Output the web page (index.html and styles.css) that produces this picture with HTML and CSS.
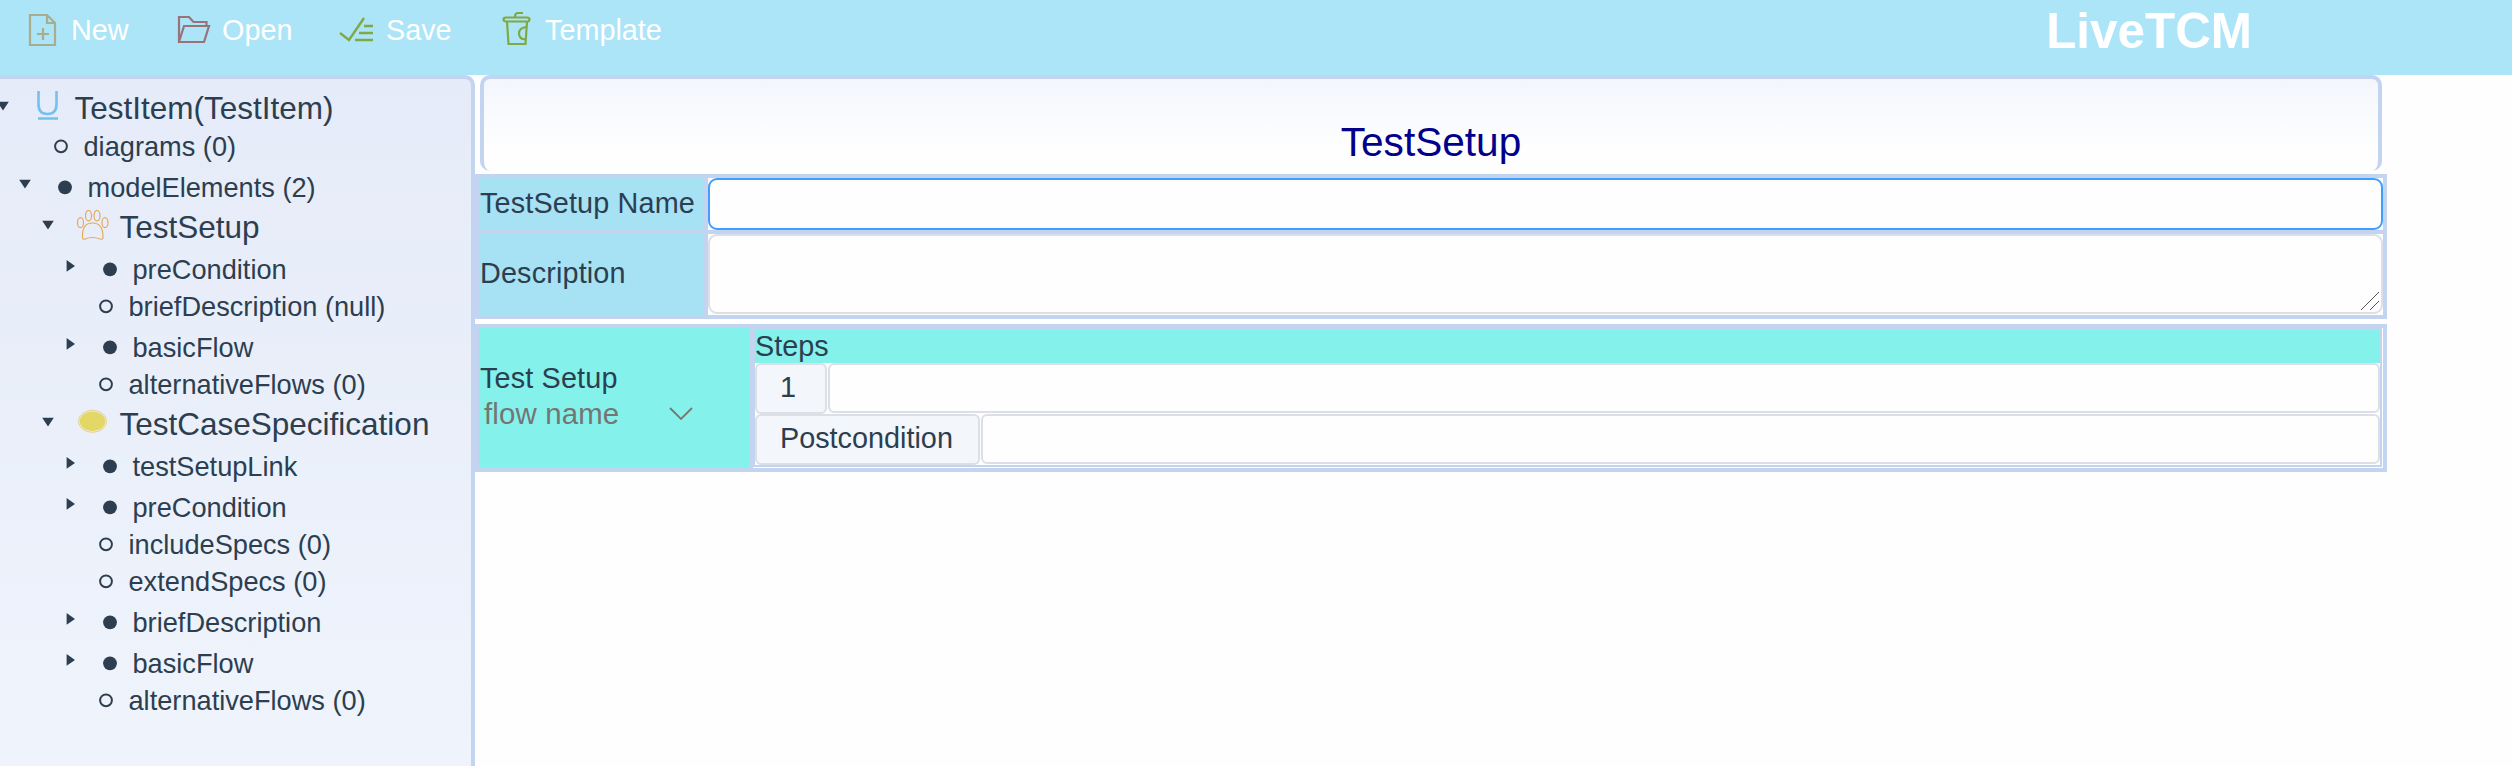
FILE: index.html
```
<!DOCTYPE html>
<html lang="en">
<head>
<meta charset="utf-8">
<title>LiveTCM</title>
<link rel="stylesheet" href="styles.css">
</head>
<body>
<svg class="defs" aria-hidden="true">
  <symbol id="down" viewBox="0 0 12 37"><path d="M.2 10.800h11.600L6 19.500z" fill="#2c3e50"/></symbol>
  <symbol id="right" viewBox="0 0 12 37"><path d="M2.600 9v11.700l8.400-5.800z" fill="#2c3e50"/></symbol>
  <symbol id="full" viewBox="0 0 14 37"><circle cx="7" cy="18.3" r="6.9" fill="#2c3e50"/></symbol>
  <symbol id="open" viewBox="0 0 14 37"><circle cx="7" cy="18.3" r="5.900" fill="none" stroke="#2c3e50" stroke-width="2"/></symbol>
</svg>
<header class="topbar">
  <nav class="tools">
    <a class="tool new"><svg class="ico" viewBox="0 0 32 36" fill="none" stroke="#a7ad8d" stroke-width="2.2"><path d="M3 4h17l8 8v22H3zM20 4v8h8M16 17v12M10 23h12"/></svg><span>New</span></a>
    <a class="tool open"><svg class="ico" viewBox="0 0 36 36" fill="none" stroke="#9a7379" stroke-width="2.2"><path d="M3 30V5h10l4.500 5h13v4M3 30l5-16h25l-5 16z"/></svg><span>Open</span></a>
    <a class="tool save"><svg class="ico" viewBox="0 0 36 36" fill="none" stroke="#80a843" stroke-width="2.4"><path d="M1 21l9 7L25 6M25 14h9M20 21h14M16 28h18"/></svg><span>Save</span></a>
    <a class="tool template"><svg class="ico" viewBox="0 0 32 38" fill="none" stroke="#80a843" stroke-width="2.2"><path d="M14 7q0-4 3-4h5M5 7.500h21q2.500 0 2.500 2t-2.500 2H5q-2.500 0-2.500-2t2.500-2zM6 12l1.500 22h17L26 12M25 17q-7 1-7 6.500t6.500 6"/></svg><span>Template</span></a>
  </nav>
  <h1 class="brand">LiveTCM</h1>
</header>
<div class="body">
  <aside class="tree">
    <div class="row l0 node"><svg class="arrow"><use href="#down"/></svg><svg class="icon" viewBox="0 0 34 37" fill="none" stroke="#74c0ee" stroke-width="2.6"><path d="M7.500 0v13q0 10 9 10t9-10V0M7 27.500h20"/></svg><span>TestItem(TestItem)</span></div>
    <div class="row l1 leaf"><svg class="dot"><use href="#open"/></svg><span>diagrams (0)</span></div>
    <div class="row l1"><svg class="arrow"><use href="#down"/></svg><svg class="dot"><use href="#full"/></svg><span>modelElements (2)</span></div>
    <div class="row l2 node"><svg class="arrow"><use href="#down"/></svg><svg class="icon" viewBox="0 0 34 37" fill="none" stroke="#e3a95c" stroke-width="1.2"><ellipse cx="12.500" cy="5.700" rx="3" ry="5.200"/><ellipse cx="21" cy="5.700" rx="3" ry="5.200"/><ellipse cx="4.500" cy="12.700" rx="3" ry="5"/><ellipse cx="29" cy="12.700" rx="3" ry="5"/><path d="M6.500 27Q6 13 16.500 13T27 27q0 3-3 2-7.500-3-15 0-2.500 1-2.500-2z"/></svg><span>TestSetup</span></div>
    <div class="row l3"><svg class="arrow"><use href="#right"/></svg><svg class="dot"><use href="#full"/></svg><span>preCondition</span></div>
    <div class="row l3 leaf"><svg class="dot"><use href="#open"/></svg><span>briefDescription (null)</span></div>
    <div class="row l3"><svg class="arrow"><use href="#right"/></svg><svg class="dot"><use href="#full"/></svg><span>basicFlow</span></div>
    <div class="row l3 leaf"><svg class="dot"><use href="#open"/></svg><span>alternativeFlows (0)</span></div>
    <div class="row l2 node"><svg class="arrow"><use href="#down"/></svg><svg class="icon" viewBox="0 0 34 37"><ellipse cx="16.500" cy="14.300" rx="14" ry="11" fill="none" stroke="#e6cf8a"/><ellipse cx="16.500" cy="14.300" rx="12.800" ry="9.900" fill="#e3d865"/></svg><span>TestCaseSpecification</span></div>
    <div class="row l3"><svg class="arrow"><use href="#right"/></svg><svg class="dot"><use href="#full"/></svg><span>testSetupLink</span></div>
    <div class="row l3"><svg class="arrow"><use href="#right"/></svg><svg class="dot"><use href="#full"/></svg><span>preCondition</span></div>
    <div class="row l3 leaf"><svg class="dot"><use href="#open"/></svg><span>includeSpecs (0)</span></div>
    <div class="row l3 leaf"><svg class="dot"><use href="#open"/></svg><span>extendSpecs (0)</span></div>
    <div class="row l3"><svg class="arrow"><use href="#right"/></svg><svg class="dot"><use href="#full"/></svg><span>briefDescription</span></div>
    <div class="row l3"><svg class="arrow"><use href="#right"/></svg><svg class="dot"><use href="#full"/></svg><span>basicFlow</span></div>
    <div class="row l3 leaf"><svg class="dot"><use href="#open"/></svg><span>alternativeFlows (0)</span></div>
  </aside>
  <main class="editor">
    <h2 class="title">TestSetup</h2>
    <section class="form">
      <div class="label">TestSetup Name</div>
      <div class="cell"><div class="input focused"></div></div>
      <div class="label">Description</div>
      <div class="cell"><div class="input area"><svg class="grip" viewBox="0 0 20 20" stroke="#555" fill="none"><path d="M1 19L19 1M10 19l9-9"/></svg></div></div>
    </section>
    <section class="flow">
      <div class="flow-name">
        <div>Test Setup</div>
        <div class="select"><span>flow name</span><svg class="chev" viewBox="0 0 24 14" fill="none" stroke="#77776f" stroke-width="1.8"><path d="M1 1l11 11L23 1"/></svg></div>
      </div>
      <div class="steps-wrap">
        <div class="steps">
          <div class="steps-head">Steps</div>
          <div class="step"><div class="addon num">1</div><div class="field"></div></div>
          <div class="step"><div class="addon post">Postcondition</div><div class="field"></div></div>
        </div>
      </div>
    </section>
  </main>
</div>
</body>
</html>
```
FILE: styles.css
```
* { box-sizing: border-box; }
body {
  margin: 0;
  height: 766px;
  overflow: hidden;
  background: #fefefe;
  color: #2c3e50;
  font: 28.8px "Liberation Sans", Arial, sans-serif;
}
svg { display: block; flex: none; }
.defs { display: none; }

.topbar {
  display: flex;
  justify-content: space-between;
  height: 75px;
  padding-right: 260px;
  background: #ace5f8;
  color: #fff;
}
.tools { display: flex; padding-left: 27px; }
.tool { display: flex; height: 60px; line-height: 60px; }
.ico { margin-top: 12px; }
.new { width: 149px; }
.new .ico { width: 32px; height: 36px; margin-top: 11px; margin-right: 12px; }
.open { width: 163px; }
.open .ico { width: 36px; height: 36px; margin-right: 10px; }
.save { width: 162px; }
.save .ico { width: 36px; height: 36px; margin-right: 11px; }
.template .ico { width: 32px; height: 38px; margin: 10px 12px 0 0; }
.brand { margin: 0; font-size: 49.4px; line-height: 62px; }

.body { display: flex; height: 691px; }
.tree {
  flex: none;
  width: 475px;
  padding-top: 8px;
  border: solid #c3d4f1;
  border-width: 4px 4px 0 0;
  border-top-right-radius: 10px;
  background: linear-gradient(#e5ebf8, #eff4fc);
}
.row {
  display: flex;
  align-items: flex-end;
  height: 41px;
  font-size: 27.2px;
  line-height: 37px;
  white-space: nowrap;
}
.row.leaf { height: 37px; }
.l0 { margin-left: -3.5px; }
.l1 { margin-left: 19px; }
.l2 { margin-left: 41.5px; }
.l3 { margin-left: 64px; }
.arrow { width: 12px; height: 37px; }
.dot { width: 14px; height: 37px; margin: 0 15.5px 0 27px; }
.leaf .dot { margin-left: 35px; margin-right: 15.5px; }
.icon { width: 34px; height: 37px; margin: 0 12px 0 22px; }
.node span { font-size: 31.5px; line-height: 40px; margin-left: -2px; }

.editor { width: 1912px; }
.title {
  height: 96px;
  margin: 0 5px 3px;
  padding-top: 33px;
  border: solid #c3d4f1;
  border-width: 4px 4px 0;
  border-radius: 10px;
  background: linear-gradient(#f3f6fc, #fefefe 75%);
  color: #00008b;
  font-size: 40.6px;
  font-weight: 400;
  line-height: 60px;
  text-align: center;
}
.form {
  display: grid;
  grid-template: 52px 81px / 225px 1fr;
  gap: 4px;
  height: 145px;
  margin-bottom: 5px;
  padding: 4px;
  background: #c3d4f1;
}
.label {
  display: flex;
  align-items: center;
  padding: 0 0 2px 1px;
  background: #a6e1f4;
  letter-spacing: .15px;
  white-space: nowrap;
}
.cell { background: #fefefe; }
.input { height: 52px; border: 2px solid #dcdfe6; border-radius: 9px; background: #fefefe; }
.focused { border-color: #409eff; }
.area { display: flex; align-items: flex-end; justify-content: flex-end; height: 80px; padding: 0 1px 1px; }
.grip { width: 20px; height: 20px; }
.flow {
  display: grid;
  grid-template-columns: 270px 1fr;
  gap: 4px;
  height: 148px;
  padding: 4px;
  background: #c3d4f1;
}
.flow-name { padding: 32px 0 0 1px; background: #84f2eb; line-height: 36px; letter-spacing: .15px; }
.select { display: flex; align-items: center; padding-left: 4px; color: #757575; }
.select span { width: 185px; font-size: 29.4px; }
.chev { width: 24px; height: 14px; margin-top: -1px; }
.steps-wrap { padding: 0 1px 1px 0; background: #fefefe; }
.steps { height: 139px; border: 2px solid #c3d4f1; background: #fefefe; }
.steps-head { height: 33px; line-height: 33px; background: #84f2eb; }
.step { display: flex; height: 51px; gap: 1px; }
.addon { height: 51px; padding-left: 23px; border: 2px solid #dcdfe6; border-radius: 6px; background: #f3f6fa; line-height: 45px; }
.num { width: 72px; }
.post { width: 225px; }
.field { flex: 1; height: 50px; border: 2px solid #dcdfe6; border-radius: 6px; background: #fefefe; }
```
